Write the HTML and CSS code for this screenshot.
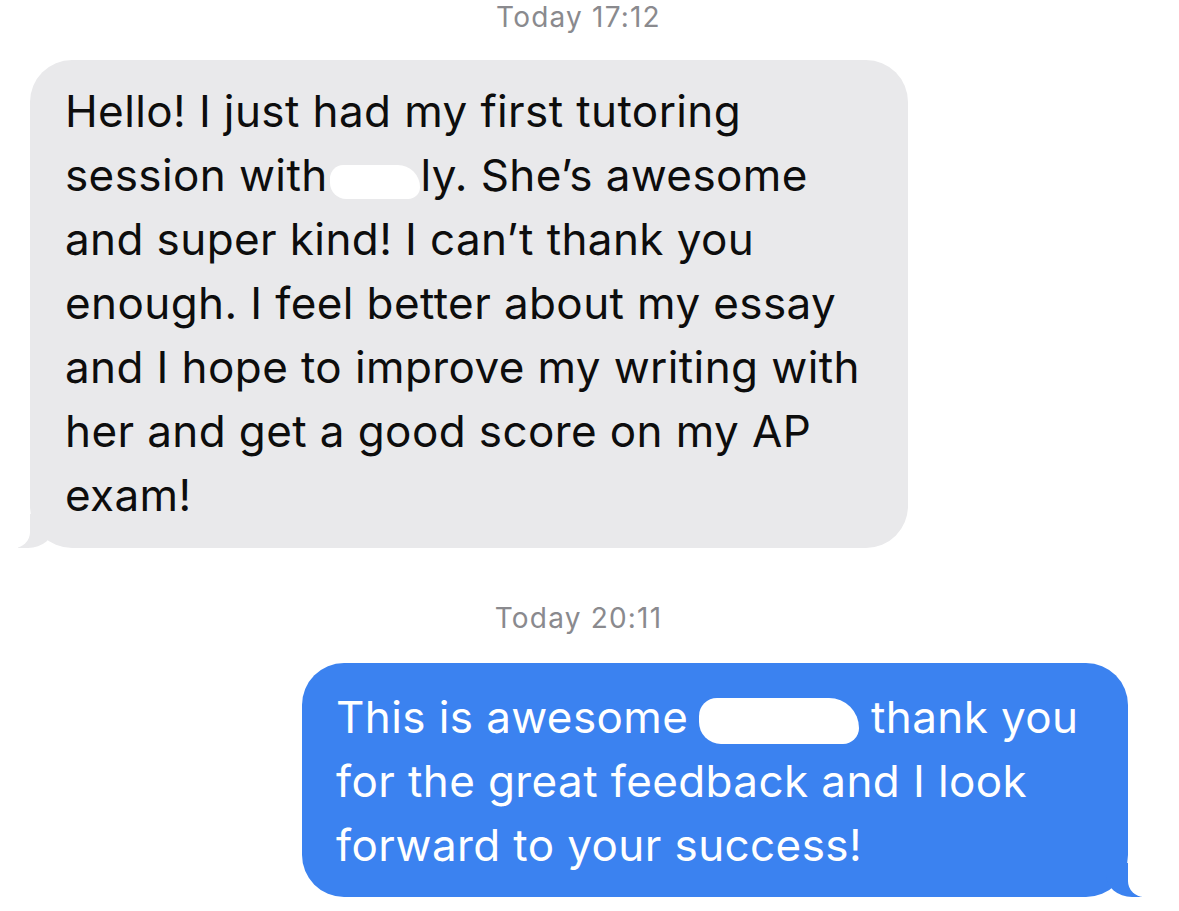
FILE: index.html
```html
<!DOCTYPE html>
<html lang="en">
<head>
  <meta charset="UTF-8">
  <title>Messages</title>
  <link rel="stylesheet" href="styles.css">
</head>
<body>

<div class="thread">
  <div class="stamp">Today 17:12</div>
  <div class="row incoming">
    <div class="bubble gray">
      Hello! I just had my first tutoring<br>
      session with <span class="smudge small"></span>ly. She’s awesome<br>
      and super kind! I can’t thank you<br>
      enough. I feel better about my essay<br>
      and I hope to improve my writing with<br>
      her and get a good score on my AP<br>
      exam!
    </div>
  </div>

  <div class="stamp">Today 20:11</div>
  <div class="row outgoing">
    <div class="bubble blue">
      This is awesome <span class="smudge wide"></span>, thank you<br>
      for the great feedback and I look<br>
      forward to your success!
    </div>
  </div>
</div>

</body>
</html>
```

FILE: styles.css
```css
body {
  margin: 0;
  background: #ffffff;
  font-family: 'Inter', 'Liberation Sans', sans-serif;
  color: #0d0d0d;
}
.thread {
  display: flex;
  flex-direction: column;
  padding-top: 2px;
}
.stamp {
  text-align: center;
  font-size: 28px;
  letter-spacing: 1.2px;
  color: #8a8a8e;
  line-height: 30px;
  padding-right: 22px;
}
.stamp + .row {
  margin-top: 28px;
}
.stamp + .outgoing {
  margin-top: 30px;
}
.row + .stamp {
  margin-top: 55px;
}
.row {
  display: flex;
}
.incoming {
  padding-left: 30px;
}
.outgoing {
  justify-content: flex-end;
  padding-right: 51px;
}
.bubble {
  position: relative;
  font-size: 44px;
  letter-spacing: 0.4px;
  line-height: 64px;
  padding: 19px 0 21px 35px;
  border-radius: 42px;
  box-sizing: border-box;
}
.gray {
  background: #e9e9eb;
  width: 878px;
}
.blue {
  background: #3b82f0;
  color: #ffffff;
  width: 826px;
  padding: 22px 0 20px 34px;
}

/* bubble tails */
.bubble::before,
.bubble::after {
  content: "";
  position: absolute;
  bottom: 0;
  height: 34px;
}
.gray::before {
  left: -12px;
  width: 36px;
  background: #e9e9eb;
  border-bottom-right-radius: 26px 22px;
}
.gray::after {
  left: -40px;
  width: 40px;
  background: #ffffff;
  border-bottom-right-radius: 16px;
}
.blue::before {
  right: -14px;
  width: 36px;
  background: #3b82f0;
  border-bottom-left-radius: 26px 22px;
}
.blue::after {
  right: -40px;
  width: 40px;
  background: #ffffff;
  border-bottom-left-radius: 16px;
}

/* redacted names */
.smudge {
  display: inline-block;
  vertical-align: middle;
  background: #ffffff;
  border-radius: 18px 30px 16px 22px;
}
.smudge.small {
  width: 90px;
  height: 34px;
  margin: 6px 0 0 -10px;
}
.smudge.wide {
  width: 160px;
  height: 46px;
  margin: 0 -14px 0 -2px;
}
```
